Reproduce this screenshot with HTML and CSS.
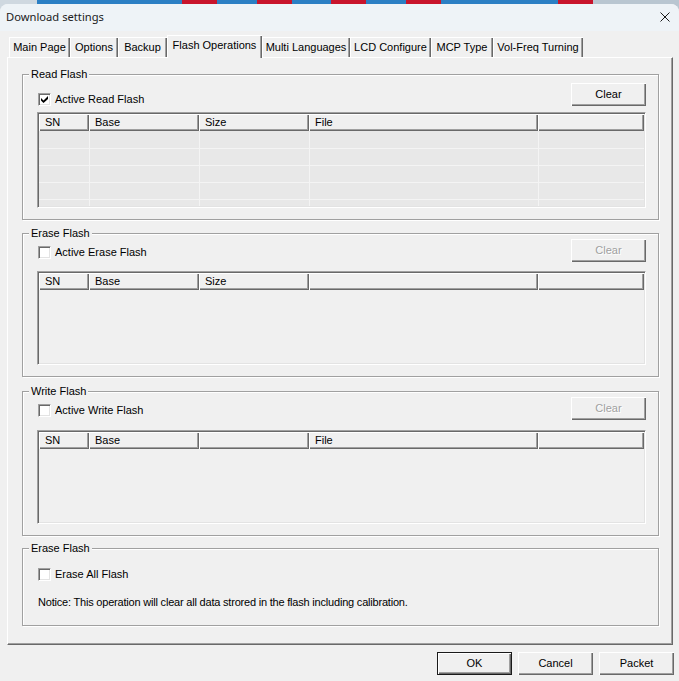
FILE: index.html
```html
<!DOCTYPE html>
<html>
<head>
<meta charset="utf-8">
<title>Download settings</title>
<link rel="stylesheet" href="styles.css">
</head>
<body>
<div class="window">
  <div class="titlebar">
    <span class="title">Download settings</span>
    <svg class="close" width="10" height="10" viewBox="0 0 10 10"><path d="M0.5 0.5 L9.5 9.5 M9.5 0.5 L0.5 9.5" stroke="#1a1a1a" stroke-width="1" fill="none"/></svg>
  </div>
  <div class="client">
    <div class="tabs">
      <div class="tab t-main">Main Page</div>
      <div class="tab t-opt">Options</div>
      <div class="tab t-bak">Backup</div>
      <div class="tab sel t-flash">Flash Operations</div>
      <div class="tab t-multi">Multi Languages</div>
      <div class="tab t-lcd">LCD Configure</div>
      <div class="tab t-mcp">MCP Type</div>
      <div class="tab t-vol">Vol-Freq Turning</div>
    </div>
    <div class="panel">
      <div class="group g-read">
        <div class="legend">Read Flash</div>
        <div class="ctrl-row">
          <div class="chk chk-low"><span class="box"><svg width="7" height="7" viewBox="0 0 7 7"><polygon points="0,2 2.5,4.5 7,0 7,3 2.5,7 0,4.5" fill="#000"/></svg></span><span>Active Read Flash</span></div>
          <button class="btn">Clear</button>
        </div>
        <div class="list l-read">
          <div class="lhead"><div class="hc c1">SN</div><div class="hc c2">Base</div><div class="hc c3">Size</div><div class="hc c4">File</div><div class="hc c5"></div></div>
          <div class="lbody grid">
            <div class="row"><div class="cell c1"></div><div class="cell c2"></div><div class="cell c3"></div><div class="cell c4"></div><div class="cell c5"></div></div>
            <div class="row"><div class="cell c1"></div><div class="cell c2"></div><div class="cell c3"></div><div class="cell c4"></div><div class="cell c5"></div></div>
            <div class="row"><div class="cell c1"></div><div class="cell c2"></div><div class="cell c3"></div><div class="cell c4"></div><div class="cell c5"></div></div>
            <div class="row"><div class="cell c1"></div><div class="cell c2"></div><div class="cell c3"></div><div class="cell c4"></div><div class="cell c5"></div></div>
            <div class="row"><div class="cell c1"></div><div class="cell c2"></div><div class="cell c3"></div><div class="cell c4"></div><div class="cell c5"></div></div>
          </div>
        </div>
      </div>

      <div class="group g-erase">
        <div class="legend">Erase Flash</div>
        <div class="ctrl-row">
          <div class="chk"><span class="box"></span><span>Active Erase Flash</span></div>
          <button class="btn disabled">Clear</button>
        </div>
        <div class="list l-erase">
          <div class="lhead"><div class="hc c1">SN</div><div class="hc c2">Base</div><div class="hc c3">Size</div><div class="hc c4"></div><div class="hc c5"></div></div>
          <div class="lbody"></div>
        </div>
      </div>

      <div class="group g-write">
        <div class="legend">Write Flash</div>
        <div class="ctrl-row">
          <div class="chk"><span class="box"></span><span>Active Write Flash</span></div>
          <button class="btn disabled">Clear</button>
        </div>
        <div class="list l-write">
          <div class="lhead"><div class="hc c1">SN</div><div class="hc c2">Base</div><div class="hc c3"></div><div class="hc c4">File</div><div class="hc c5"></div></div>
          <div class="lbody"></div>
        </div>
      </div>

      <div class="group g-all">
        <div class="legend">Erase Flash</div>
        <div class="chk"><span class="box"></span><span>Erase All Flash</span></div>
        <div class="notice">Notice: This operation will clear all data strored in the flash including calibration.</div>
      </div>
    </div>
    <div class="footer">
      <button class="btn default">OK</button>
      <button class="btn">Cancel</button>
      <button class="btn">Packet</button>
    </div>
  </div>
</div>
</body>
</html>
```

FILE: styles.css
```css
* { box-sizing: border-box; }
html, body { margin: 0; padding: 0; }
body {
  width: 679px;
  height: 681px;
  overflow: hidden;
  font-family: "Liberation Sans", Arial, sans-serif;
  font-size: 11px;
  color: #000;
  background:
    linear-gradient(to right,
      #cfd8e0 0 37px, #2b7fc4 37px 182px, #c8142c 182px 217px, #2b7fc4 217px 257px,
      #c8142c 257px 292px, #2b7fc4 292px 331px, #c8142c 331px 366px, #2b7fc4 366px 406px,
      #c8142c 406px 441px, #2b7fc4 441px 558px, #c8142c 558px 593px, #b9c6d1 593px) top left / 100% 12px no-repeat,
    #f0f0f0;
}

.window {
  margin-top: 4px;
  height: 677px;
  border-radius: 8px 8px 0 0;
  overflow: hidden;
  background: #f0f0f0;
}

.titlebar {
  height: 27px;
  background: #eef3f7;
  display: flex;
  align-items: center;
  justify-content: space-between;
  padding: 0 9px 2px 6px;
  font-family: "Noto Sans", "Liberation Sans", sans-serif;
  font-size: 11.2px;
  color: #1a1a1a;
}
.close { display: block; }

.client { padding: 4px 0 0 7px; }

.tabs {
  display: flex;
  align-items: flex-end;
  height: 22px;
  margin-left: 2px;
}
.tab {
  height: 20px;
  line-height: 20px;
  text-align: center;
  white-space: nowrap;
  background: #f0f0f0;
  box-shadow: inset 1px 1px #fff, inset -1px 0 #696969, inset -2px 0 #a0a0a0;
}
.tab.sel {
  height: 23px;
  line-height: 20px;
  margin-bottom: -1px;
  position: relative;
  z-index: 1;
}
.t-main { width: 61px; }
.t-opt { width: 48px; }
.t-bak { width: 49px; }
.t-flash { width: 95px; }
.t-multi { width: 88px; }
.t-lcd { width: 81px; }
.t-mcp { width: 62px; }
.t-vol { width: 90px; }

.panel {
  width: 666px;
  height: 588px;
  border: 1px solid;
  border-color: #fff #696969 #696969 #fff;
  box-shadow: inset -1px -1px #a0a0a0;
  padding: 16px 0 0 14px;
}

.group {
  position: relative;
  width: 637px;
  border: 1px solid #a0a0a0;
  box-shadow: inset 1px 1px #fff, 1px 1px #fff;
  padding: 5px 12px 11px 14px;
}
.g-read { padding-top: 8px; }
.g-erase { margin-top: 13px; }
.g-write { margin-top: 14px; }
.g-all { margin-top: 12px; padding-top: 19px; padding-bottom: 16px; }

.legend {
  position: absolute;
  top: -7px;
  left: 6px;
  padding: 0 2px;
  line-height: 13px;
  background: #f0f0f0;
}

.ctrl-row {
  display: flex;
  justify-content: space-between;
  align-items: flex-start;
  height: 23px;
}

.chk {
  display: flex;
  align-items: center;
  gap: 4px;
  height: 13px;
  line-height: 13px;
  margin-left: 1px;
  margin-top: 7px;
}
.chk-low { margin-top: 10px; }
.g-all .chk { margin-top: 0; }

.box {
  width: 13px;
  height: 13px;
  background: #fff;
  border: 1px solid;
  border-color: #a0a0a0 #fff #fff #a0a0a0;
  box-shadow: inset 1px 1px #696969, inset -1px -1px #e3e3e3;
  display: flex;
  align-items: center;
  justify-content: center;
  flex: none;
}
.box svg { display: block; }

.btn {
  width: 75px;
  height: 23px;
  padding: 0 0 2px 0;
  border: 0;
  background: #f0f0f0;
  font-family: inherit;
  font-size: 11px;
  color: #000;
  box-shadow: inset 1px 1px #fff, inset -1px -1px #696969, inset -2px -2px #a0a0a0;
}
.btn.disabled { color: #a0a0a0; text-shadow: 1px 1px #fff; }
.btn.default { border: 1px solid #1a1a1a; }

.list {
  width: 609px;
  border: 1px solid;
  border-color: #a0a0a0 #fff #fff #a0a0a0;
  box-shadow: inset 1px 1px #696969, inset -1px -1px #e3e3e3;
  padding: 1px;
  overflow: hidden;
  display: flex;
  flex-direction: column;
}
.l-read { height: 96px; margin-top: 6px; }
.l-erase { height: 94px; margin-top: 9px; }
.l-write { height: 94px; margin-top: 10px; }

.lhead { display: flex; height: 17px; flex: none; }
.hc {
  height: 17px;
  line-height: 16px;
  padding-left: 6px;
  background: #f0f0f0;
  white-space: nowrap;
  box-shadow: inset 1px 1px #fff, inset -1px -1px #696969, inset -2px -2px #a0a0a0;
}
.c1 { width: 50px; flex: none; }
.c2 { width: 110px; flex: none; }
.c3 { width: 110px; flex: none; }
.c4 { width: 229px; flex: none; }
.c5 { flex: 1; }

.lbody { flex: 1; background: #f0f0f0; overflow: hidden; }
.lbody.grid { background: #e8e8e8; padding-top: 1px; }
.row { display: flex; height: 17px; border-bottom: 1px solid #f4f4f4; }
.cell { height: 16px; }
.cell.c2, .cell.c3, .cell.c4, .cell.c5 { border-left: 1px solid #f4f4f4; }

.notice {
  margin-top: 15px;
  margin-left: 1px;
  line-height: 13px;
  white-space: nowrap;
  letter-spacing: -0.2px;
}

.footer {
  display: flex;
  justify-content: flex-end;
  gap: 6px;
  padding: 7px 5px 0 0;
}
```
